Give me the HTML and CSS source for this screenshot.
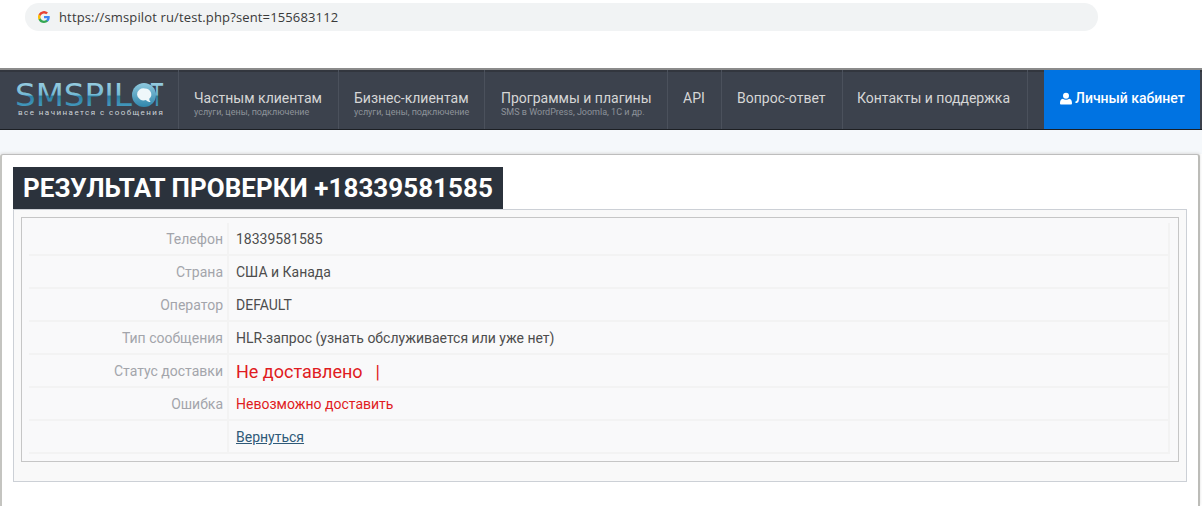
FILE: index.html
```html
<!DOCTYPE html>
<html lang="ru">
<head>
<meta charset="utf-8">
<title>SMSPILOT</title>
<link rel="stylesheet" href="styles.css">
</head>
<body>
<div class="urlzone">
  <div class="urlbar">
    <svg class="g" viewBox="0 0 24 24" width="12" height="12"><path fill="#4285F4" d="M23.5 12.3c0-.8-.1-1.600-.2-2.300H12v4.500h6.500a5.600 5.600 0 0 1-2.400 3.600v3h3.900c2.200-2.100 3.500-5.100 3.500-8.800z"/><path fill="#34A853" d="M12 24c3.200 0 6-1.100 8-2.900l-3.900-3c-1.100.7-2.500 1.200-4.100 1.200-3.100 0-5.800-2.100-6.700-5H1.300v3.100A12 12 0 0 0 12 24z"/><path fill="#FBBC05" d="M5.300 14.300a7.200 7.200 0 0 1 0-4.600V6.600H1.300a12 12 0 0 0 0 10.800z"/><path fill="#EA4335" d="M12 4.800c1.800 0 3.300.6 4.600 1.800l3.400-3.400A12 12 0 0 0 1.300 6.600l4 3.100c.9-2.800 3.600-4.900 6.700-4.900z"/></svg>
    <span class="url">https://smspilot ru/test.php?sent=155683112</span>
  </div>
</div>
<nav class="nav">
  <div class="logo">
    <svg class="logomark" viewBox="0 0 150 25" width="150" height="25">
      <defs>
        <linearGradient id="lt" x1="0" y1="0" x2="0" y2="1"><stop offset="0" stop-color="#a9d6e6"/><stop offset=".5" stop-color="#74b9d4"/><stop offset=".53" stop-color="#2c7fa3"/><stop offset="1" stop-color="#56acd0"/></linearGradient>
        <linearGradient id="lg" x1="0" y1="0" x2="0" y2="1"><stop offset="0" stop-color="#8fc9de"/><stop offset="1" stop-color="#2f86ab"/></linearGradient>
      </defs>
      <text class="logoword" x="1" y="23" textLength="117" lengthAdjust="spacingAndGlyphs" fill="url(#lt)">SMSPIL</text>
      <circle cx="130" cy="12" r="12" fill="url(#lg)"/>
      <path fill="#eef7fa" d="M131 5.500a6.500 6 0 0 1 4.300 10.300c0 1.700.5 2.700 1.600 3.300-2.200 0-3.800-.8-4.900-2.200a6.500 6 0 1 1-1-11.400z"/>
      <text class="logoword" x="137" y="23" textLength="12" lengthAdjust="spacingAndGlyphs" fill="url(#lt)">T</text>
    </svg>
    <div class="tagline">все начинается с сообщения</div>
  </div>
  <a class="item w1"><span class="main">Частным клиентам</span><span class="sub">услуги, цены, подключение</span></a>
  <a class="item w2"><span class="main">Бизнес-клиентам</span><span class="sub">услуги, цены, подключение</span></a>
  <a class="item w3"><span class="main">Программы и плагины</span><span class="sub">SMS в WordPress, Joomla, 1С и др.</span></a>
  <a class="item w4"><span class="main">API</span></a>
  <a class="item w5"><span class="main">Вопрос-ответ</span></a>
  <a class="item w6"><span class="main">Контакты и поддержка</span></a>
  <div class="spacer"></div>
  <a class="cabinet"><svg viewBox="0 0 14 14" width="12" height="13"><circle cx="7" cy="3.800" r="3.500" fill="#fff"/><path fill="#fff" d="M1 14c-.6-.1-1-.6-1-1.300 0-3 .8-5.500 3.300-5.500 1 .8 2.300 1.300 3.700 1.300s2.700-.5 3.700-1.300c2.500 0 3.300 2.500 3.300 5.500 0 .7-.4 1.200-1 1.300z"/></svg>Личный кабинет</a>
</nav>
<div class="band"></div>
<main class="card">
  <h1 class="title">РЕЗУЛЬТАТ ПРОВЕРКИ +18339581585</h1>
  <section class="outer">
    <div class="inner">
      <div class="row"><div class="label">Телефон</div><div class="value">18339581585</div></div>
      <div class="row"><div class="label">Страна</div><div class="value">США и Канада</div></div>
      <div class="row"><div class="label">Оператор</div><div class="value">DEFAULT</div></div>
      <div class="row"><div class="label">Тип сообщения</div><div class="value">HLR-запрос (узнать обслуживается или уже нет)</div></div>
      <div class="row"><div class="label">Статус доставки</div><div class="value status">Не доставлено<span class="bar">|</span></div></div>
      <div class="row"><div class="label">Ошибка</div><div class="value error">Невозможно доставить</div></div>
      <div class="row"><div class="label"></div><div class="value"><a class="back">Вернуться</a></div></div>
    </div>
  </section>
</main>
</body>
</html>
```
FILE: styles.css
```css
* { box-sizing: border-box; }
html, body { margin: 0; padding: 0; background: #fff; height: 506px; overflow: hidden; }
body { font-family: Roboto, "Liberation Sans", sans-serif; color: #444; }

.urlzone { height: 68px; padding: 3px 104px 0 25px; background: #fff; }
.urlbar { height: 28px; border-radius: 14px; background: #f1f3f4; display: flex; align-items: center; padding-left: 13px; gap: 9px; }
.url { font-size: 13px; color: #3a3a3a; letter-spacing: .14px; font-family: "Open Sans", sans-serif; white-space: nowrap; }
.g { flex: none; }

.nav { height: 62px; background: #3c424d; border-top: 2px solid #8b8b8b; border-bottom: 1px solid #1c1f24; display: flex; color: #d4d4d4; box-shadow: inset 0 2px 0 #32363e; }
.logo { width: 179px; flex: none; border-right: 1px solid #4b515c; padding: 13px 0 0 14px; }
.logomark { display: block; overflow: visible; }
.logoword { font-size: 32px; font-family: "DejaVu Sans", sans-serif; }
.tagline { font-size: 8px; line-height: 10px; letter-spacing: 1.45px; color: #cdd3d8; margin: 0 0 0 4px; white-space: nowrap; }

.item { flex: none; border-right: 1px solid #4b515c; display: flex; flex-direction: column; justify-content: flex-start; align-items: flex-start; padding-top: 20px; color: #d6d6d6; }
.w1 { width: 160px; padding-left: 15px; }
.w2 { width: 146px; padding-left: 15px; }
.w3 { width: 183px; padding-left: 16px; }
.w4 { width: 54px; padding-left: 15px; }
.w5 { width: 121px; padding-left: 15px; }
.w6 { width: 185px; padding-left: 14px; }
.main { font-size: 14px; line-height: 16px; white-space: nowrap; }
.sub { font-size: 9px; line-height: 10px; color: #8d929a; white-space: nowrap; margin-top: 1px; }
.spacer { flex: 1; }
.cabinet { flex: none; width: 156px; margin-right: 2px; background: #0073e2; color: #fff; font-size: 14px; font-weight: 500; display: flex; align-items: center; padding: 0 0 3px 16px; gap: 3px; }

.band { height: 24px; background: #f5f8fb; }

.card { height: 352px; margin-right: 2px; background: #fff; border-top: 1px solid #bdbdbd; border-right: 2px solid #bcbcb8; border-left: 2px solid #c4c4c0; border-top-left-radius: 3px; border-top-right-radius: 3px; box-shadow: 0 -1px 3px #ddd; padding: 12px 11px 0 11px; }
.title { display: table; margin: 0; height: 42px; padding: 0 10px; background: #2b323c; color: #fff; font-size: 26px; line-height: 42px; font-weight: 700; letter-spacing: .03px; white-space: nowrap; }
.outer { height: 273px; background: #f9f9f9; border: 1px solid #ccd0d6; padding: 7px 7px 0; }
.inner { height: 245px; border: 1px solid #c6c6c6; background: #f9f9fa; padding: 5px 8px 0 7px; }
.row { display: flex; height: 33px; border-bottom: 2px solid #f3f3f3; border-right: 2px solid #f3f3f3; }
.label { width: 200px; flex: none; text-align: right; padding-right: 4px; color: #a3a5ab; font-size: 14px; line-height: 32px; border-right: 2px solid #f3f3f3; }
.value { padding-left: 7px; font-size: 14px; line-height: 32px; color: #4d4d4d; flex: 1; }
.status { font-size: 18px; line-height: 33px; color: #e01b22; }
.bar { margin-left: 13px; }
.error { color: #e01b22; }
.back { color: #2f5a78; text-decoration: underline; }
```
